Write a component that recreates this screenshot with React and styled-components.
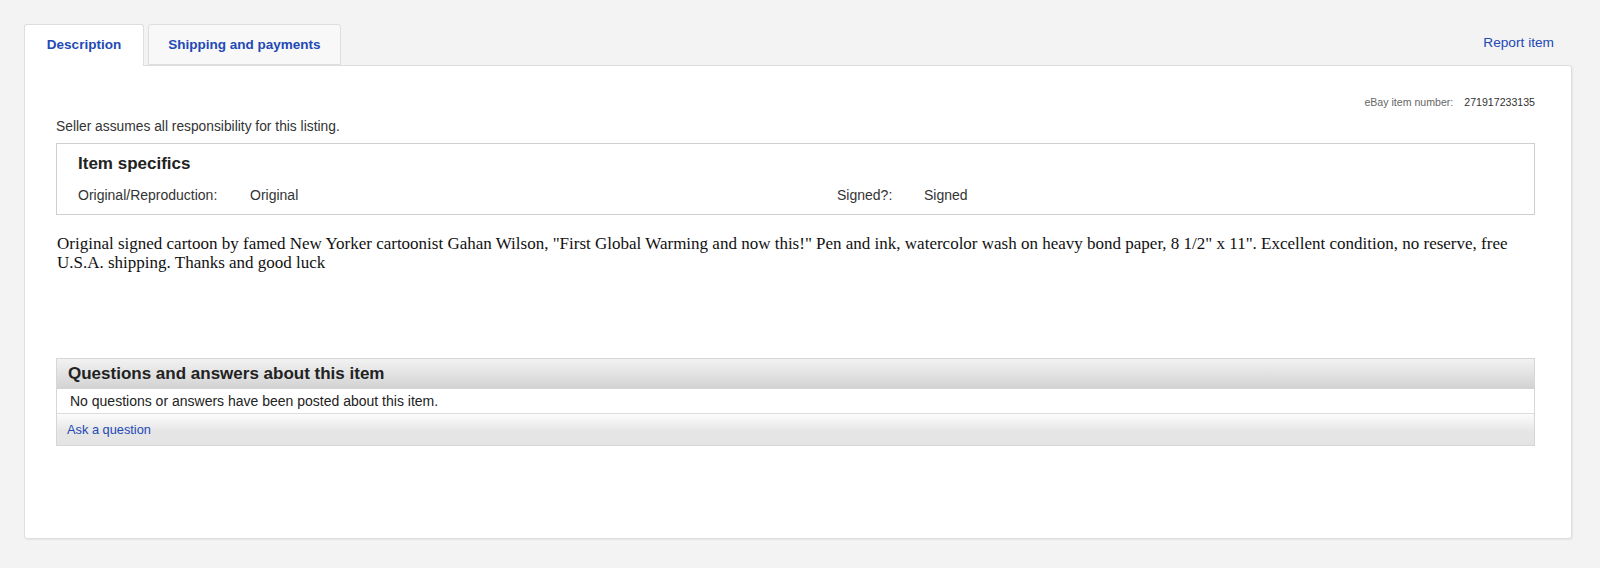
import React from 'react';
import styled, { createGlobalStyle } from 'styled-components';

const GlobalStyle = createGlobalStyle`
  html, body {
    margin: 0;
    padding: 0;
    background: #f3f3f3;
  }
  body {
    font-family: "Liberation Sans", Arial, sans-serif;
    color: #333;
  }
`;

const Page = styled.div`
  padding: 24px 28px 29px 24px;
`;

const TabBar = styled.div`
  display: flex;
  align-items: flex-end;
  height: 41px;
  position: relative;
  z-index: 1;
`;

const Tab = styled.div`
  box-sizing: border-box;
  height: ${(p) => (p.active ? '42px' : '41px')};
  width: ${(p) => p.w}px;
  margin-right: 4px;
  margin-bottom: ${(p) => (p.active ? '-1px' : '0')};
  display: flex;
  align-items: center;
  justify-content: center;
  padding-bottom: ${(p) => (p.active ? '2px' : '1px')};
  background: ${(p) => (p.active ? '#fff' : '#f8f8f8')};
  border: 1px solid #dedede;
  border-bottom: ${(p) => (p.active ? 'none' : '1px solid #dedede')};
  border-radius: 3px 3px 0 0;
  font-size: 13.5px;
  font-weight: bold;
  color: #2349b5;
  cursor: pointer;
`;

const ReportLink = styled.a`
  margin-left: auto;
  align-self: flex-start;
  margin-top: 11px;
  margin-right: 18px;
  font-size: 13.7px;
  color: #2349b5;
  text-decoration: none;
`;

const Panel = styled.div`
  background: #fff;
  border: 1px solid #dedede;
  border-radius: 0 3px 3px 3px;
  box-shadow: 1px 1px 2px rgba(0, 0, 0, 0.06);
  padding: 30px 36px 91px 31px;
  height: 474px;
  box-sizing: border-box;
`;

const ItemNumber = styled.div`
  display: flex;
  justify-content: flex-end;
  font-size: 10.6px;
  line-height: 13px;
  color: #666;
  gap: 11px;
`;

const Number = styled.span`
  color: #333;
`;

const SellerNote = styled.div`
  margin-top: 9px;
  font-size: 13.8px;
  line-height: 17px;
  color: #333;
`;

const SpecBox = styled.div`
  margin-top: 8px;
  border: 1px solid #cfcfcf;
  padding: 10px 20px 10px 21px;
`;

const SpecTitle = styled.h3`
  margin: 0;
  font-size: 17px;
  line-height: 20px;
  font-weight: bold;
  color: #222;
`;

const SpecGrid = styled.div`
  margin-top: 13px;
  display: grid;
  grid-template-columns: 172px 587px 87px 1fr;
  font-size: 14px;
  line-height: 17px;
  color: #333;
`;

const Description = styled.div`
  margin-top: 19px;
  padding-left: 1px;
  font-family: "Liberation Serif", "Times New Roman", serif;
  font-size: 17px;
  line-height: 19px;
  color: #111;
  min-height: 124px;
`;

const QaBox = styled.div`
  border: 1px solid #d6d6d6;
`;

const QaHeader = styled.div`
  height: 30px;
  display: flex;
  align-items: center;
  padding-left: 11px;
  background: linear-gradient(to bottom, #f2f2f2, #d2d2d2);
  font-size: 17px;
  font-weight: bold;
  color: #222;
`;

const QaRow = styled.div`
  height: 24px;
  display: flex;
  align-items: center;
  padding-left: 13px;
  background: #fff;
  border-bottom: 1px solid #dcdcdc;
  font-size: 14px;
  color: #222;
`;

const QaFooter = styled.div`
  height: 31px;
  display: flex;
  align-items: center;
  padding-left: 10px;
  background: linear-gradient(to bottom, #fcfcfc, #e6e6e6 55%, #e4e4e4);
`;

const AskLink = styled.a`
  font-size: 12.8px;
  color: #2349b5;
  text-decoration: none;
`;

const specs = [
  ['Original/Reproduction:', 'Original'],
  ['Signed?:', 'Signed'],
];

export default function App() {
  return (
    <>
      <GlobalStyle />
      <Page>
        <TabBar>
          <Tab active w={120}>Description</Tab>
          <Tab w={193}>Shipping and payments</Tab>
          <ReportLink href="#">Report item</ReportLink>
        </TabBar>
        <Panel>
          <ItemNumber>
            <span>eBay item number:</span>
            <Number>271917233135</Number>
          </ItemNumber>
          <SellerNote>Seller assumes all responsibility for this listing.</SellerNote>
          <SpecBox>
            <SpecTitle>Item specifics</SpecTitle>
            <SpecGrid>
              {specs.map(([label, value]) => (
                <React.Fragment key={label}>
                  <span>{label}</span>
                  <span>{value}</span>
                </React.Fragment>
              ))}
            </SpecGrid>
          </SpecBox>
          <Description>
            Original signed cartoon by famed New Yorker cartoonist Gahan Wilson, "First Global Warming and now
            this!" Pen and ink, watercolor wash on heavy bond paper, 8 1/2" x 11". Excellent condition, no
            reserve, free U.S.A. shipping. Thanks and good luck
          </Description>
          <QaBox>
            <QaHeader>Questions and answers about this item</QaHeader>
            <QaRow>No questions or answers have been posted about this item.</QaRow>
            <QaFooter>
              <AskLink href="#">Ask a question</AskLink>
            </QaFooter>
          </QaBox>
        </Panel>
      </Page>
    </>
  );
}
